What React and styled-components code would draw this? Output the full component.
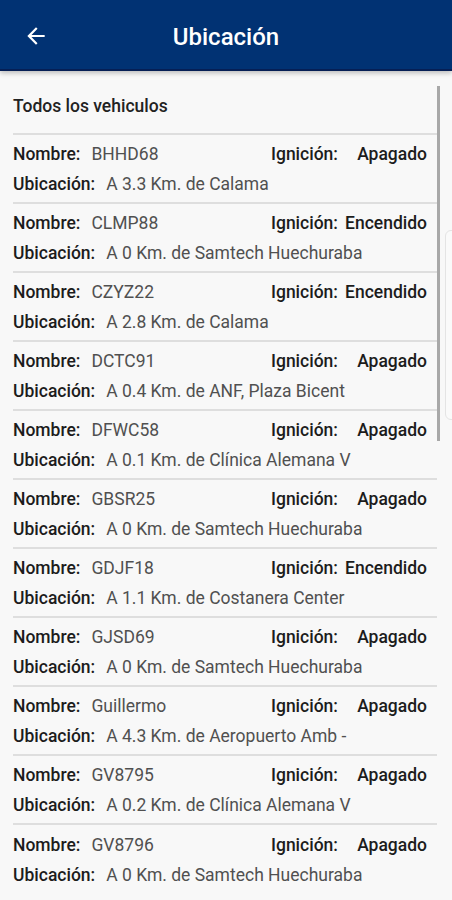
import React from 'react';
import styled, { createGlobalStyle } from 'styled-components';

const GlobalStyle = createGlobalStyle`
    html, body {
        margin: 0;
        padding: 0;
        background: #f8f8f8;
        font-family: Roboto, "Noto Sans", sans-serif;
    }
`

const Screen = styled.div`
    width: 452px;
    height: 900px;
    overflow: hidden;
    position: relative;
    background: #f8f8f8;
    display: flex;
    flex-direction: column;
`

const Header = styled.div`
    height: 69px;
    flex-shrink: 0;
    background: #013273;
    border-bottom: 2px solid #061f55;
    box-shadow: 0 2px 5px rgba(0, 0, 0, 0.25);
    display: flex;
    align-items: center;
    position: relative;
    z-index: 2;
`

const BackButton = styled.div`
    width: 72px;
    display: flex;
    justify-content: center;
    padding-top: 2px;
`

const Title = styled.div`
    flex: 1;
    text-align: center;
    color: #ffffff;
    font-size: 24px;
    font-weight: 500;
    margin-right: 72px;
    padding-top: 4px;
`

const Body = styled.div`
    flex: 1;
    display: flex;
    padding: 14px 12px 0 13px;
    position: relative;
`

const List = styled.div`
    flex: 1;
    display: flex;
    flex-direction: column;
`

const Scrollbar = styled.div`
    width: 3px;
    height: 355px;
    margin-top: 1px;
    background: #a8a8a8;
    flex-shrink: 0;
`

const ListTitle = styled.div`
    height: 50px;
    display: flex;
    align-items: center;
    font-size: 17.5px;
    font-weight: 500;
    color: #222;
    border-bottom: 2px solid #dedede;
    box-sizing: border-box;
    padding-bottom: 6px;
`

const Row = styled.div`
    height: 69px;
    box-sizing: border-box;
    border-bottom: ${p => (p.last ? 'none' : '2px solid #dedede')};
    display: flex;
    flex-direction: column;
    justify-content: center;
    gap: 10px;
    padding-top: 1px;
    padding-right: 10px;
`

const Line = styled.div`
    display: flex;
    align-items: center;
    font-size: 17.5px;
    line-height: 20px;
`

const Label = styled.span`
    font-weight: 500;
    color: #1c1c1c;
    margin-right: 11px;
`

const Value = styled.span`
    color: #505050;
    flex: 1;
    white-space: nowrap;
`

const Ignition = styled.div`
    width: 156px;
    display: flex;
    justify-content: space-between;
    font-weight: 500;
    color: #1c1c1c;
    white-space: nowrap;
`

const EdgePanel = styled.div`
    position: absolute;
    right: -8px;
    top: 230px;
    width: 13px;
    height: 188px;
    border: 1px solid #e4e4e4;
    border-radius: 6px;
    background: #fafafa;
`

const vehicles = [
    ['BHHD68', 'Apagado', 'A 3.3 Km. de Calama'],
    ['CLMP88', 'Encendido', 'A 0 Km. de Samtech Huechuraba'],
    ['CZYZ22', 'Encendido', 'A 2.8 Km. de Calama'],
    ['DCTC91', 'Apagado', 'A 0.4 Km. de ANF, Plaza Bicent'],
    ['DFWC58', 'Apagado', 'A 0.1 Km. de Clínica Alemana V'],
    ['GBSR25', 'Apagado', 'A 0 Km. de Samtech Huechuraba'],
    ['GDJF18', 'Encendido', 'A 1.1 Km. de Costanera Center'],
    ['GJSD69', 'Apagado', 'A 0 Km. de Samtech Huechuraba'],
    ['Guillermo', 'Apagado', 'A 4.3 Km. de Aeropuerto Amb -'],
    ['GV8795', 'Apagado', 'A 0.2 Km. de Clínica Alemana V'],
    ['GV8796', 'Apagado', 'A 0 Km. de Samtech Huechuraba'],
]

const BackArrow = () => (
    <svg width="26" height="26" viewBox="0 0 24 24">
        <path d="M20 11H7.83l5.59-5.59L12 4l-8 8 8 8 1.41-1.41L7.83 13H20v-2z" fill="#fff" />
    </svg>
)

const App = () => (
    <Screen>
        <GlobalStyle />
        <Header>
            <BackButton><BackArrow /></BackButton>
            <Title>Ubicación</Title>
        </Header>
        <Body>
            <List>
                <ListTitle>Todos los vehiculos</ListTitle>
                {vehicles.map(([name, ign, loc], i) => (
                    <Row key={name} last={i === vehicles.length - 1}>
                        <Line>
                            <Label>Nombre:</Label>
                            <Value>{name}</Value>
                            <Ignition>
                                <span>Ignición:</span>
                                <span>{ign}</span>
                            </Ignition>
                        </Line>
                        <Line>
                            <Label>Ubicación:</Label>
                            <Value>{loc}</Value>
                        </Line>
                    </Row>
                ))}
            </List>
            <Scrollbar />
        </Body>
        <EdgePanel />
    </Screen>
)

export default App;
